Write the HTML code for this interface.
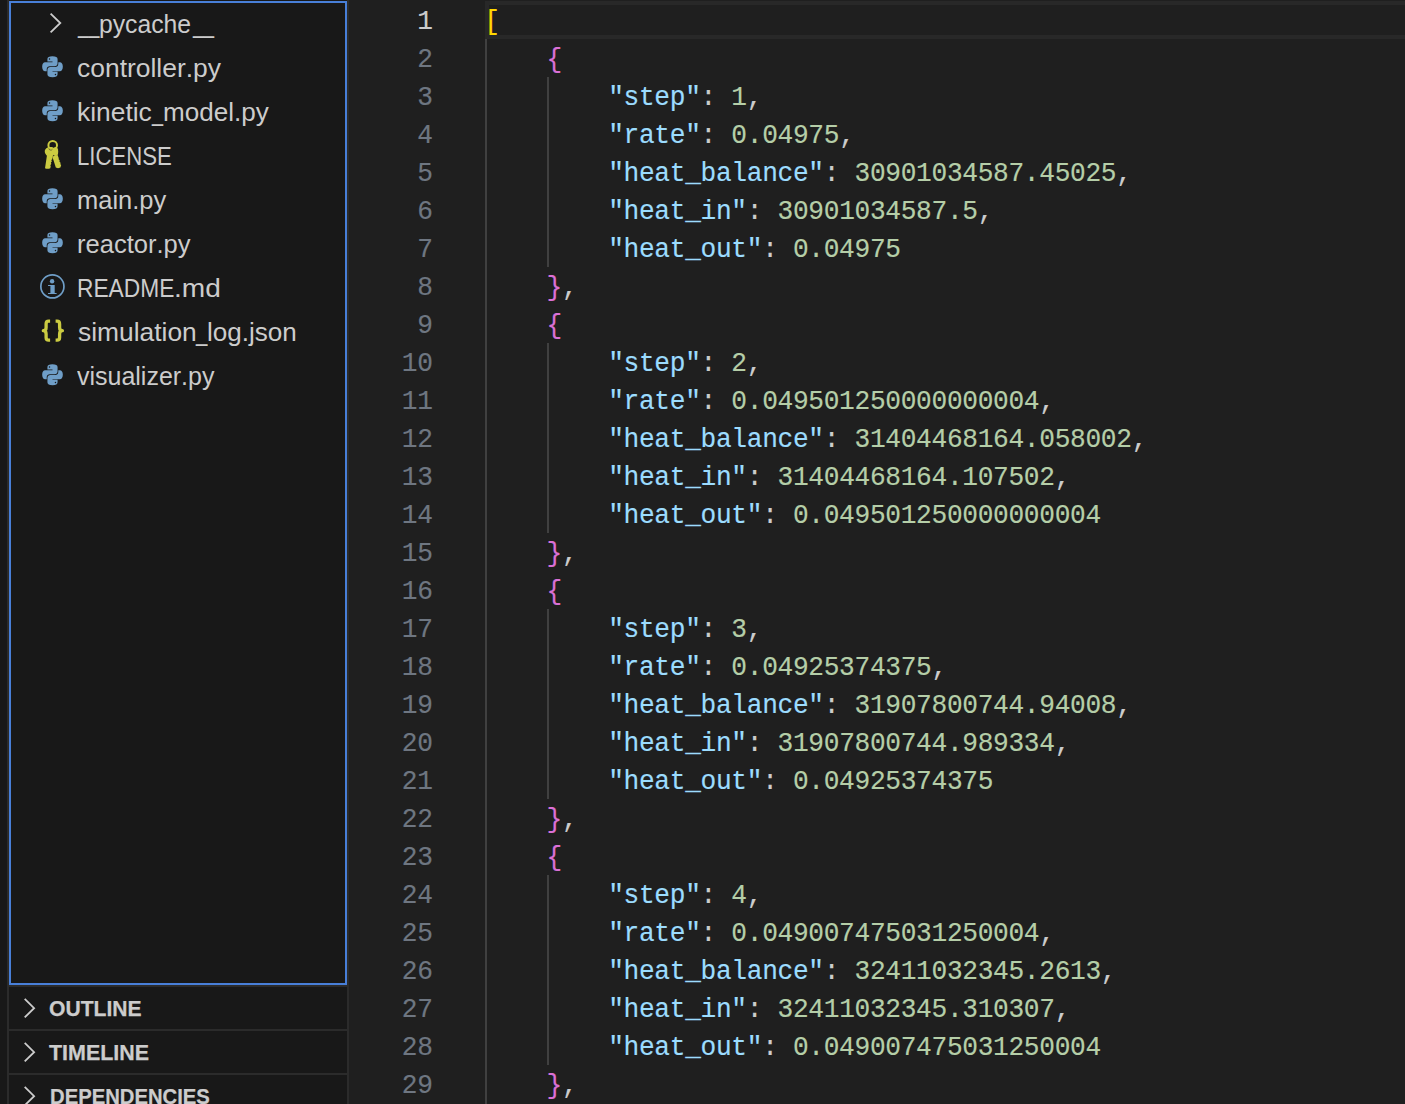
<!DOCTYPE html>
<html><head><meta charset="utf-8"><title>simulation_log.json</title>
<style>
*{margin:0;padding:0;box-sizing:border-box}
html,body{width:1405px;height:1104px;overflow:hidden;background:#1f1f1f}
body{position:relative;font-family:"Liberation Sans",sans-serif;font-kerning:none}
i{font-style:normal}
.abar{position:absolute;left:0;top:0;width:7px;height:1104px;background:#181818}
.ab{position:absolute;left:7px;top:0;width:2px;height:1104px;background:#2b2b2b}
.side{position:absolute;left:9px;top:0;width:338px;height:1104px;background:#181818;overflow:hidden}
.sb{position:absolute;left:347px;top:0;width:2px;height:1104px;background:#2b2b2b}
.focus{position:absolute;left:0;top:1px;width:338px;height:984px;border:2px solid #487fd8}
.a{position:absolute;overflow:visible}
.t{position:absolute;height:44px;line-height:44.57px;font-size:26px;color:#cccccc;white-space:pre;transform-origin:0 50%}
.ph{position:absolute;left:0;width:338px;height:44px;border-top:2px solid #2b2b2b;color:#cccccc}
.h{position:absolute;top:0;height:42px;line-height:43.19px;font-weight:bold;font-size:22.8px;-webkit-text-stroke:0.25px;white-space:pre;transform-origin:0 50%}
.ed{position:absolute;left:0;top:0;width:1405px;height:1104px;overflow:hidden;font-family:"Liberation Mono",monospace;font-size:26.2px;letter-spacing:-0.320px}
.ln,.cl{position:absolute;height:38px;line-height:38px;white-space:pre;transform:scaleY(1.045);transform-origin:0 25.97px}
.ln{-webkit-text-stroke:0.15px;left:349px;width:83.62px;text-align:right;color:#6e7681}
.ln.cur{color:#cccccc}
.cl{color:#cccccc;-webkit-text-stroke:0.15px}
.k{color:#9cdcfe}.n{color:#b5cea8}.b1{color:#ffd700}.b2{color:#da70d6}
.g{position:absolute;width:2px;background:#404040}
.curline{position:absolute;left:485px;top:1px;width:930px;height:38px;border:4px solid #282828}
</style></head><body>
<div class="abar"></div><div class="ab"></div>
<div class="side">
<div class="focus"></div>
<span class="t" style="left:68.74px;top:2px;transform:scaleX(0.7354)">__</span>
<span class="t" style="left:90.35px;top:2px;transform:scaleX(0.9509)">pycache</span>
<span class="t" style="left:183.53px;top:2px;transform:scaleX(0.7288)">__</span>
<span class="t" style="left:67.58px;top:46px;transform:scaleX(1.0170)">controller.py</span>
<span class="t" style="left:67.98px;top:90px;transform:scaleX(1.0152)">kinetic</span>
<span class="t" style="left:142.76px;top:90px;transform:scaleX(0.7625)">_</span>
<span class="t" style="left:153.90px;top:90px;transform:scaleX(1.0029)">model.py</span>
<span class="t" style="left:67.99px;top:134px;transform:scaleX(0.8529)">LICENSE</span>
<span class="t" style="left:68.32px;top:178px;transform:scaleX(0.9807)">main.py</span>
<span class="t" style="left:68.32px;top:222px;transform:scaleX(0.9825)">reactor.py</span>
<span class="t" style="left:67.95px;top:266px;transform:scaleX(0.8752)">README</span>
<span class="t" style="left:165.04px;top:266px;transform:scaleX(1.0807)">.md</span>
<span class="t" style="left:68.90px;top:310px;transform:scaleX(1.0148)">simulation</span>
<span class="t" style="left:186.99px;top:310px;transform:scaleX(0.7875)">_</span>
<span class="t" style="left:198.00px;top:310px;transform:scaleX(1.0028)">log.json</span>
<span class="t" style="left:68.30px;top:354px;transform:scaleX(0.9605)">visualizer.py</span>
<svg class="a" style="left:35px;top:10px;width:24px;height:26px" viewBox="0 0 24 26"><path d="M6.600 3.600L16.300 13L6.600 22.400" fill="none" stroke="#cccccc" stroke-width="1.800"/></svg>
<svg class="a" style="left:32.8px;top:55.7px;width:21px;height:21.400px" viewBox="0 0 24 24" preserveAspectRatio="none"><path fill="#6f9ec7" fill-rule="evenodd" d="M11.9 .2C8 .2 6.2 1.3 6.2 3.400V6.200H12V7H3.700C1.500 7 .2 8.900 .2 12c0 3.100 1.300 5 3.500 5H5.400V14.900C5.400 12.900 6.900 11.550 8.900 11.550H14.500C16.300 11.550 17.800 10.200 17.800 8.400V3.400C17.800 1.300 15.800 .2 11.900 .2ZM8.600 2.450a.85 .85 0 1 1 0 1.700a.85 .85 0 1 1 0-1.700Z"/><path fill="#6f9ec7" fill-rule="evenodd" transform="rotate(180 12 12)" d="M11.9 .2C8 .2 6.2 1.3 6.2 3.400V6.200H12V7H3.700C1.500 7 .2 8.900 .2 12c0 3.100 1.300 5 3.500 5H5.400V14.900C5.400 12.900 6.900 11.550 8.900 11.550H14.500C16.300 11.550 17.800 10.200 17.800 8.400V3.400C17.800 1.300 15.800 .2 11.900 .2ZM8.600 2.450a.85 .85 0 1 1 0 1.700a.85 .85 0 1 1 0-1.700Z"/></svg>
<svg class="a" style="left:32.8px;top:99.7px;width:21px;height:21.400px" viewBox="0 0 24 24" preserveAspectRatio="none"><path fill="#6f9ec7" fill-rule="evenodd" d="M11.9 .2C8 .2 6.2 1.3 6.2 3.400V6.200H12V7H3.700C1.500 7 .2 8.900 .2 12c0 3.100 1.300 5 3.500 5H5.400V14.900C5.400 12.900 6.900 11.550 8.900 11.550H14.500C16.300 11.550 17.800 10.200 17.800 8.400V3.400C17.800 1.300 15.800 .2 11.900 .2ZM8.600 2.450a.85 .85 0 1 1 0 1.700a.85 .85 0 1 1 0-1.700Z"/><path fill="#6f9ec7" fill-rule="evenodd" transform="rotate(180 12 12)" d="M11.9 .2C8 .2 6.2 1.3 6.2 3.400V6.200H12V7H3.700C1.500 7 .2 8.900 .2 12c0 3.100 1.300 5 3.500 5H5.400V14.900C5.400 12.900 6.900 11.550 8.900 11.550H14.500C16.300 11.550 17.800 10.200 17.800 8.400V3.400C17.800 1.300 15.800 .2 11.900 .2ZM8.600 2.450a.85 .85 0 1 1 0 1.700a.85 .85 0 1 1 0-1.700Z"/></svg>
<svg class="a" style="left:32.8px;top:187.7px;width:21px;height:21.400px" viewBox="0 0 24 24" preserveAspectRatio="none"><path fill="#6f9ec7" fill-rule="evenodd" d="M11.9 .2C8 .2 6.2 1.3 6.2 3.400V6.200H12V7H3.700C1.500 7 .2 8.900 .2 12c0 3.100 1.300 5 3.500 5H5.400V14.900C5.400 12.900 6.900 11.550 8.900 11.550H14.500C16.300 11.550 17.800 10.200 17.800 8.400V3.400C17.800 1.300 15.800 .2 11.900 .2ZM8.600 2.450a.85 .85 0 1 1 0 1.700a.85 .85 0 1 1 0-1.700Z"/><path fill="#6f9ec7" fill-rule="evenodd" transform="rotate(180 12 12)" d="M11.9 .2C8 .2 6.2 1.3 6.2 3.400V6.200H12V7H3.700C1.500 7 .2 8.900 .2 12c0 3.100 1.300 5 3.500 5H5.400V14.900C5.400 12.900 6.900 11.550 8.900 11.550H14.500C16.300 11.550 17.800 10.200 17.800 8.400V3.400C17.800 1.300 15.800 .2 11.900 .2ZM8.600 2.450a.85 .85 0 1 1 0 1.700a.85 .85 0 1 1 0-1.700Z"/></svg>
<svg class="a" style="left:32.8px;top:231.7px;width:21px;height:21.400px" viewBox="0 0 24 24" preserveAspectRatio="none"><path fill="#6f9ec7" fill-rule="evenodd" d="M11.9 .2C8 .2 6.2 1.3 6.2 3.400V6.200H12V7H3.700C1.500 7 .2 8.900 .2 12c0 3.100 1.300 5 3.500 5H5.400V14.900C5.400 12.900 6.900 11.550 8.900 11.550H14.500C16.300 11.550 17.800 10.200 17.800 8.400V3.400C17.800 1.300 15.800 .2 11.900 .2ZM8.600 2.450a.85 .85 0 1 1 0 1.700a.85 .85 0 1 1 0-1.700Z"/><path fill="#6f9ec7" fill-rule="evenodd" transform="rotate(180 12 12)" d="M11.9 .2C8 .2 6.2 1.3 6.2 3.400V6.200H12V7H3.700C1.500 7 .2 8.900 .2 12c0 3.100 1.300 5 3.500 5H5.400V14.900C5.400 12.900 6.900 11.550 8.900 11.550H14.500C16.300 11.550 17.800 10.200 17.800 8.400V3.400C17.800 1.300 15.800 .2 11.900 .2ZM8.600 2.450a.85 .85 0 1 1 0 1.700a.85 .85 0 1 1 0-1.700Z"/></svg>
<svg class="a" style="left:32.8px;top:363.7px;width:21px;height:21.400px" viewBox="0 0 24 24" preserveAspectRatio="none"><path fill="#6f9ec7" fill-rule="evenodd" d="M11.9 .2C8 .2 6.2 1.3 6.2 3.400V6.200H12V7H3.700C1.500 7 .2 8.900 .2 12c0 3.100 1.300 5 3.500 5H5.400V14.900C5.400 12.900 6.900 11.550 8.900 11.550H14.500C16.300 11.550 17.800 10.200 17.800 8.400V3.400C17.800 1.300 15.800 .2 11.900 .2ZM8.600 2.450a.85 .85 0 1 1 0 1.700a.85 .85 0 1 1 0-1.700Z"/><path fill="#6f9ec7" fill-rule="evenodd" transform="rotate(180 12 12)" d="M11.9 .2C8 .2 6.2 1.3 6.2 3.400V6.200H12V7H3.700C1.500 7 .2 8.900 .2 12c0 3.100 1.300 5 3.500 5H5.400V14.900C5.400 12.900 6.900 11.550 8.900 11.550H14.500C16.300 11.550 17.800 10.200 17.800 8.400V3.400C17.800 1.300 15.800 .2 11.900 .2ZM8.600 2.450a.85 .85 0 1 1 0 1.700a.85 .85 0 1 1 0-1.700Z"/></svg>
<svg class="a" style="left:35px;top:139px;width:19px;height:31px" viewBox="0 0 19 31"><g fill="#cbcb41"><circle cx="8.700" cy="6.200" r="4.300" fill="none" stroke="#cbcb41" stroke-width="2"/><ellipse cx="11.600" cy="12.500" rx="2.600" ry="4.600"/><path d="M8.300 17.500L13.600 16L17.200 26L16.400 28.500L14 29.300L11.800 28.500Z"/><path d="M6.400 8C9.700 8 12.050 10 12.050 12.300C12.050 14.300 10.200 15.600 8.900 16.800L6.300 29.200Q3.600 30.400 1 29.200L2.900 16.800C1.800 15.600 .75 14.300 .75 12.300C.75 10 3.100 8 6.400 8Z"/></g><g fill="#181818"><circle cx="8.100" cy="21.300" r=".75"/><circle cx="7.600" cy="23.800" r=".75"/><circle cx="7.100" cy="26.300" r=".75"/><circle cx="15.300" cy="20" r=".7"/><circle cx="16.200" cy="22.500" r=".7"/><circle cx="17.100" cy="25" r=".7"/></g><path d="M4.800 9.400A2 2 0 0 0 8.400 10.300" fill="none" stroke="#181818" stroke-width=".7" opacity=".7"/></svg>
<svg class="a" style="left:30px;top:273px;width:27px;height:27px" viewBox="0 0 27 27"><circle cx="13.400" cy="13.400" r="11.550" fill="none" stroke="#6f9ec7" stroke-width="1.700"/><circle cx="13.100" cy="8.200" r="2.200" fill="#6f9ec7"/><path fill="#6f9ec7" d="M9.050 11.900H15.700V20H17.600V21.100H9.050V20H11.400V12.900H9.050Z"/></svg>
<svg class="a" style="left:-9px;top:0;width:80px;height:400px" viewBox="0 0 80 400"><g fill="none" stroke="#cbcb41" stroke-width="3.300" stroke-linejoin="round"><path d="M50.100 321.200H48.600Q46.100 321.200 46.100 323.900V327.400Q46.100 330.650 43.300 330.650Q46.100 330.650 46.100 333.900V337.400Q46.100 340.100 48.600 340.100H50.100"/><path transform="translate(105.700 0) scale(-1 1)" d="M50.100 321.200H48.600Q46.100 321.200 46.100 323.900V327.400Q46.100 330.650 43.300 330.650Q46.100 330.650 46.100 333.900V337.400Q46.100 340.100 48.600 340.100H50.100"/></g></svg>
<div class="ph" style="top:985px"><svg class="a" style="left:14px;top:10px;width:14px;height:22px" viewBox="0 0 14 22"><path d="M1.700 1.900L11.100 11.200L1.700 20.400" fill="none" stroke="#cccccc" stroke-width="1.800"/></svg><span class="h" style="left:40.10px;transform:scaleX(0.9255)">OUTLINE</span></div>
<div class="ph" style="top:1029px"><svg class="a" style="left:14px;top:10px;width:14px;height:22px" viewBox="0 0 14 22"><path d="M1.700 1.900L11.100 11.200L1.700 20.400" fill="none" stroke="#cccccc" stroke-width="1.800"/></svg><span class="h" style="left:40.10px;transform:scaleX(0.9409)">TIMELINE</span></div>
<div class="ph" style="top:1073px"><svg class="a" style="left:14px;top:10px;width:14px;height:22px" viewBox="0 0 14 22"><path d="M1.700 1.900L11.100 11.200L1.700 20.400" fill="none" stroke="#cccccc" stroke-width="1.800"/></svg><span class="h" style="left:40.51px;transform:scaleX(0.8888)">DEPENDENCIES</span></div>
</div>
<div class="sb"></div>
<div class="ed">
<div class="curline"></div>
<div class="g" style="left:485px;top:39px;height:1065px"></div>
<div class="g" style="left:547px;top:77px;height:190px"></div>
<div class="g" style="left:547px;top:343px;height:190px"></div>
<div class="g" style="left:547px;top:609px;height:190px"></div>
<div class="g" style="left:547px;top:875px;height:190px"></div>
<div class="ln cur" style="top:3.23px">1</div>
<div class="cl" style="top:3.23px;left:484.3px"><i class="b1">[</i></div>
<div class="ln" style="top:41.23px">2</div>
<div class="cl" style="top:41.23px;left:546.6px"><i class="b2">{</i></div>
<div class="ln" style="top:79.23px">3</div>
<div class="cl" style="top:79.23px;left:608.2px"><i class="k">"step"</i>: <i class="n">1</i>,</div>
<div class="ln" style="top:117.23px">4</div>
<div class="cl" style="top:117.23px;left:608.2px"><i class="k">"rate"</i>: <i class="n">0.04975</i>,</div>
<div class="ln" style="top:155.23px">5</div>
<div class="cl" style="top:155.23px;left:608.2px"><i class="k">"heat_balance"</i>: <i class="n">30901034587.45025</i>,</div>
<div class="ln" style="top:193.23px">6</div>
<div class="cl" style="top:193.23px;left:608.2px"><i class="k">"heat_in"</i>: <i class="n">30901034587.5</i>,</div>
<div class="ln" style="top:231.23px">7</div>
<div class="cl" style="top:231.23px;left:608.2px"><i class="k">"heat_out"</i>: <i class="n">0.04975</i></div>
<div class="ln" style="top:269.23px">8</div>
<div class="cl" style="top:269.23px;left:546.6px"><i class="b2">}</i>,</div>
<div class="ln" style="top:307.23px">9</div>
<div class="cl" style="top:307.23px;left:546.6px"><i class="b2">{</i></div>
<div class="ln" style="top:345.23px">10</div>
<div class="cl" style="top:345.23px;left:608.2px"><i class="k">"step"</i>: <i class="n">2</i>,</div>
<div class="ln" style="top:383.23px">11</div>
<div class="cl" style="top:383.23px;left:608.2px"><i class="k">"rate"</i>: <i class="n">0.049501250000000004</i>,</div>
<div class="ln" style="top:421.23px">12</div>
<div class="cl" style="top:421.23px;left:608.2px"><i class="k">"heat_balance"</i>: <i class="n">31404468164.058002</i>,</div>
<div class="ln" style="top:459.23px">13</div>
<div class="cl" style="top:459.23px;left:608.2px"><i class="k">"heat_in"</i>: <i class="n">31404468164.107502</i>,</div>
<div class="ln" style="top:497.23px">14</div>
<div class="cl" style="top:497.23px;left:608.2px"><i class="k">"heat_out"</i>: <i class="n">0.049501250000000004</i></div>
<div class="ln" style="top:535.23px">15</div>
<div class="cl" style="top:535.23px;left:546.6px"><i class="b2">}</i>,</div>
<div class="ln" style="top:573.23px">16</div>
<div class="cl" style="top:573.23px;left:546.6px"><i class="b2">{</i></div>
<div class="ln" style="top:611.23px">17</div>
<div class="cl" style="top:611.23px;left:608.2px"><i class="k">"step"</i>: <i class="n">3</i>,</div>
<div class="ln" style="top:649.23px">18</div>
<div class="cl" style="top:649.23px;left:608.2px"><i class="k">"rate"</i>: <i class="n">0.04925374375</i>,</div>
<div class="ln" style="top:687.23px">19</div>
<div class="cl" style="top:687.23px;left:608.2px"><i class="k">"heat_balance"</i>: <i class="n">31907800744.94008</i>,</div>
<div class="ln" style="top:725.23px">20</div>
<div class="cl" style="top:725.23px;left:608.2px"><i class="k">"heat_in"</i>: <i class="n">31907800744.989334</i>,</div>
<div class="ln" style="top:763.23px">21</div>
<div class="cl" style="top:763.23px;left:608.2px"><i class="k">"heat_out"</i>: <i class="n">0.04925374375</i></div>
<div class="ln" style="top:801.23px">22</div>
<div class="cl" style="top:801.23px;left:546.6px"><i class="b2">}</i>,</div>
<div class="ln" style="top:839.23px">23</div>
<div class="cl" style="top:839.23px;left:546.6px"><i class="b2">{</i></div>
<div class="ln" style="top:877.23px">24</div>
<div class="cl" style="top:877.23px;left:608.2px"><i class="k">"step"</i>: <i class="n">4</i>,</div>
<div class="ln" style="top:915.23px">25</div>
<div class="cl" style="top:915.23px;left:608.2px"><i class="k">"rate"</i>: <i class="n">0.049007475031250004</i>,</div>
<div class="ln" style="top:953.23px">26</div>
<div class="cl" style="top:953.23px;left:608.2px"><i class="k">"heat_balance"</i>: <i class="n">32411032345.2613</i>,</div>
<div class="ln" style="top:991.23px">27</div>
<div class="cl" style="top:991.23px;left:608.2px"><i class="k">"heat_in"</i>: <i class="n">32411032345.310307</i>,</div>
<div class="ln" style="top:1029.23px">28</div>
<div class="cl" style="top:1029.23px;left:608.2px"><i class="k">"heat_out"</i>: <i class="n">0.049007475031250004</i></div>
<div class="ln" style="top:1067.23px">29</div>
<div class="cl" style="top:1067.23px;left:546.6px"><i class="b2">}</i>,</div>
</div>
</body></html>
